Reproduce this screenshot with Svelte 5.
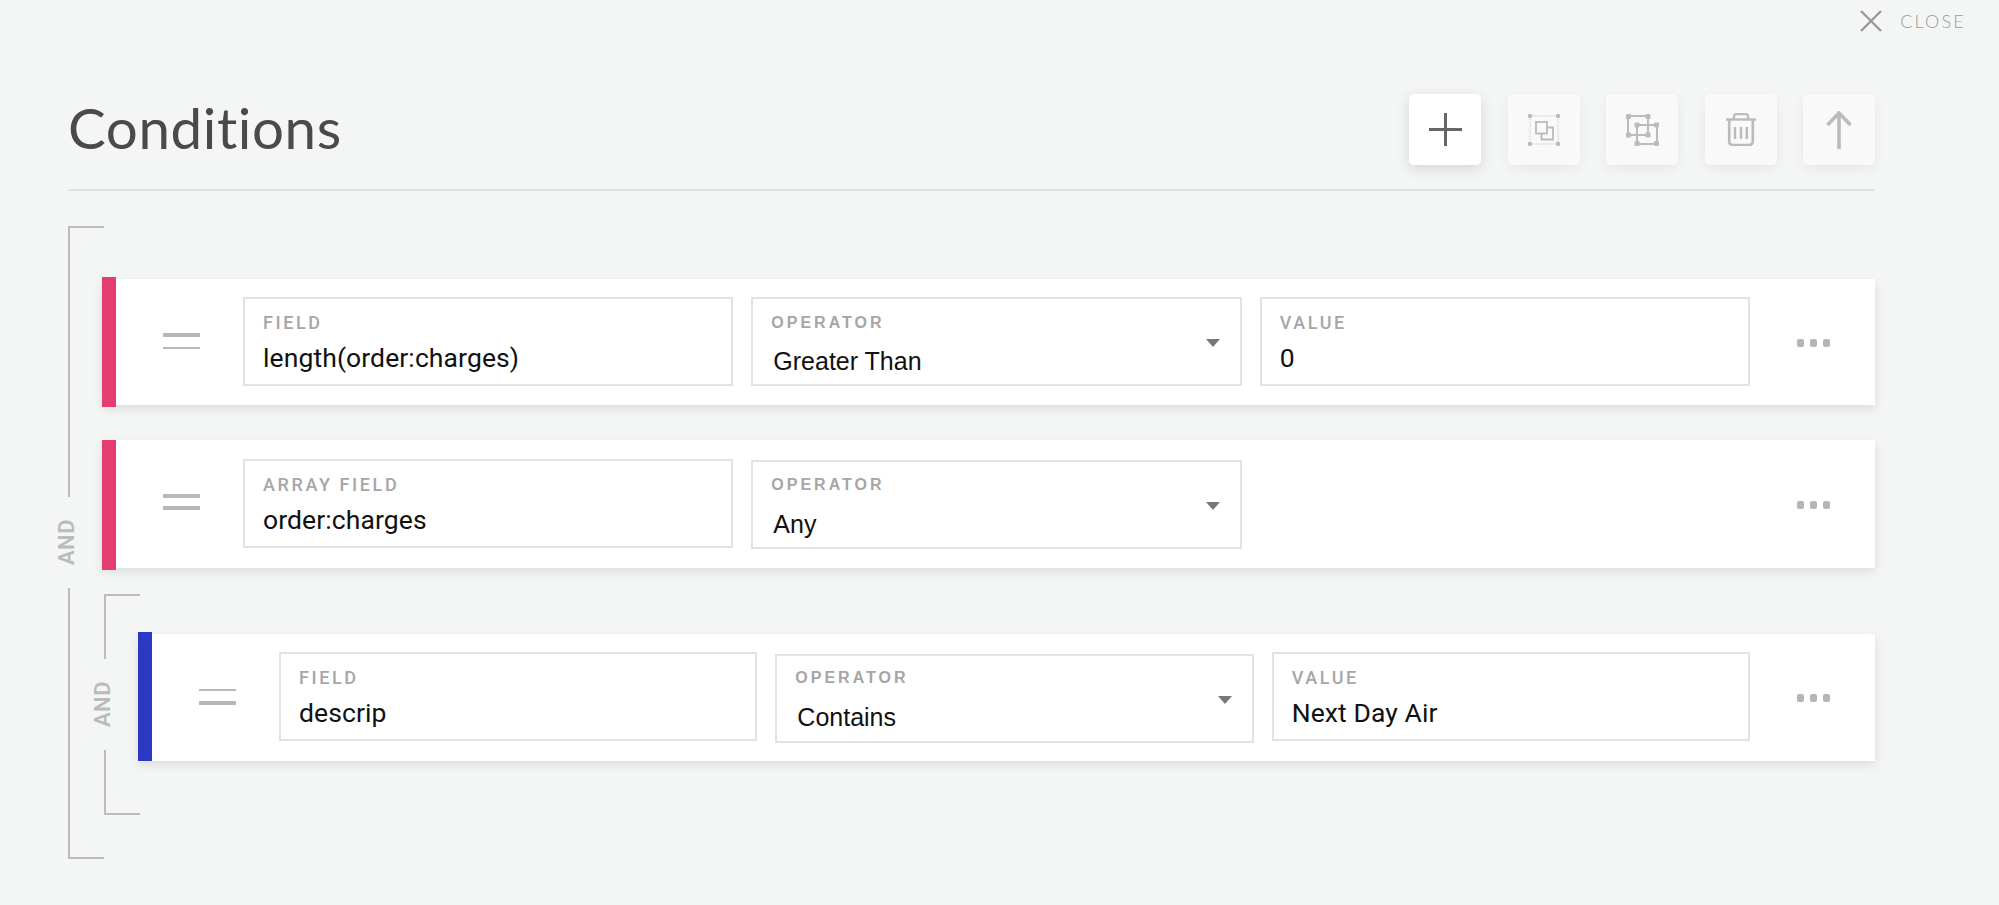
<script>
    // rule rows; the tiny row differences come from the reference's scaling
    const outerRules = [
        {
            cls: "r1 pink",
            handle: ["thick", "thin"],
            cells: [
                { label: "FIELD", value: "length(order:charges)" },
                { label: "OPERATOR", value: "Greater Than", select: true },
                { label: "VALUE", value: "0" },
            ],
        },
        {
            cls: "r2 pink",
            handle: ["thick", "thick"],
            cells: [
                { label: "ARRAY FIELD", value: "order:charges" },
                { label: "OPERATOR", value: "Any", select: true, low: true },
                null,
            ],
        },
    ];

    const innerRule = {
        cls: "r3 blue",
        handle: ["thin", "thick"],
        cells: [
            { label: "FIELD", value: "descrip" },
            { label: "OPERATOR", value: "Contains", select: true, low: true },
            { label: "VALUE", value: "Next Day Air" },
        ],
    };
</script>

{#snippet rule(item)}
    <div class="rule {item.cls}">
        <div class="handle">
            <span class={item.handle[0]}></span>
            <span class={item.handle[1]}></span>
        </div>
        <div class="cells">
            {#each item.cells as cell}
                {#if cell}
                    <div class="cell" class:select={cell.select} class:low={cell.low}>
                        <span class="label">{cell.label}</span>
                        <span class="value">{cell.value}</span>
                        {#if cell.select}
                            <i class="caret"></i>
                        {/if}
                    </div>
                {:else}
                    <div class="cell empty"></div>
                {/if}
            {/each}
        </div>
        <div class="dots">
            <span></span><span></span><span></span>
        </div>
    </div>
{/snippet}

{#snippet rail()}
    <div class="rail">
        <div class="rail-line top"></div>
        <div class="rail-mid"><span>AND</span></div>
        <div class="rail-line bottom"></div>
    </div>
{/snippet}

<div class="page">
    <div class="close">
        <svg viewBox="0 0 22 22" width="22" height="22">
            <path d="M1 1 21 21M21 1 1 21" fill="none" stroke="#999" stroke-width="2.4" />
        </svg>
        <span>CLOSE</span>
    </div>

    <header class="head">
        <h1>Conditions</h1>
        <div class="tools">
            <button class="tool active" aria-label="Add">
                <svg viewBox="0 0 33 33" width="33" height="33">
                    <path d="M16.5 0V33M0 16.5H33" stroke="#666" stroke-width="3" fill="none" />
                </svg>
            </button>
            <button class="tool" aria-label="Copy">
                <svg viewBox="0 0 32 32" width="32" height="32">
                    <rect x="2" y="2" width="28" height="28" fill="none" stroke="#c4c4c4" stroke-width="1" stroke-dasharray="1.2 1.2" />
                    <g fill="#bbb">
                        <rect x="0" y="0" width="4" height="4" rx="1" />
                        <rect x="28" y="0" width="4" height="4" rx="1" />
                        <rect x="0" y="28" width="4" height="4" rx="1" />
                        <rect x="28" y="28" width="4" height="4" rx="1" />
                    </g>
                    <rect x="8" y="8" width="11" height="11.5" fill="none" stroke="#bbb" stroke-width="1.8" />
                    <path d="M19 13.5H25V25.5H13.5V19.5" fill="none" stroke="#bbb" stroke-width="1.8" />
                </svg>
            </button>
            <button class="tool" aria-label="Group">
                <svg viewBox="0 0 33 32" width="33" height="32">
                    <g fill="none" stroke="#bbb" stroke-width="2">
                        <rect x="2" y="2" width="20" height="19" />
                        <rect x="11" y="11" width="20" height="19" />
                    </g>
                    <g fill="#bbb">
                        <rect x="0" y="0" width="5" height="5" rx="1" />
                        <rect x="19.5" y="0" width="5" height="5" rx="1" />
                        <rect x="0" y="18.5" width="5" height="5" rx="1" />
                        <rect x="19.5" y="18.5" width="5" height="5" rx="1" />
                        <rect x="8.5" y="8.5" width="5" height="5" rx="1" />
                        <rect x="28" y="8.5" width="5" height="5" rx="1" />
                        <rect x="8.5" y="27" width="5" height="5" rx="1" />
                        <rect x="28" y="27" width="5" height="5" rx="1" />
                    </g>
                </svg>
            </button>
            <button class="tool" aria-label="Delete">
                <svg viewBox="0 0 30 33" width="30" height="33">
                    <g fill="none" stroke="#bbb">
                        <path d="M0 6.5H30" stroke-width="2.4" />
                        <path d="M8 6V3.5Q8 1.2 10.5 1.2H19.5Q22 1.2 22 3.5V6" stroke-width="2.2" />
                        <path d="M3.2 7V28Q3.2 32 7 32H23Q26.8 32 26.8 28V7" stroke-width="2.6" />
                        <path d="M9 14V26M15 14V26M20.8 14V26" stroke-width="2.4" />
                    </g>
                </svg>
            </button>
            <button class="tool" aria-label="Move up">
                <svg viewBox="0 0 26 38" width="26" height="38">
                    <path d="M13 2V38M1.5 14 13 2 24.5 14" fill="none" stroke="#bbb" stroke-width="3.6" />
                </svg>
            </button>
        </div>
    </header>

    <section class="group outer">
        {@render rail()}
        <div class="body">
            {#each outerRules as item}
                {@render rule(item)}
            {/each}
            <div class="group inner">
                {@render rail()}
                <div class="body">
                    {@render rule(innerRule)}
                </div>
            </div>
        </div>
    </section>
</div>

<style>
    :global(body) {
        margin: 0;
        background: #f4f6f5;
    }

    .page {
        height: 905px;
        overflow: hidden;
        font-family: Roboto, sans-serif;
    }

    .close {
        height: 42px;
        display: flex;
        justify-content: flex-end;
        align-items: center;
        gap: 18px;
        padding-right: 33px;
        color: #9c9c9c;
        font-family: Lato, sans-serif;
        font-weight: 300;
        font-size: 18px;
        letter-spacing: 2.2px;
    }

    .head {
        margin: 0 124px 0 68px;
        padding: 52px 0 24px;
        display: flex;
        justify-content: space-between;
        align-items: center;
        border-bottom: 2px solid #e0e3e3;
    }

    h1 {
        margin: -5px 0 0 0;
        font-family: Lato, sans-serif;
        font-weight: 400;
        font-size: 56.5px;
        line-height: 64px;
        letter-spacing: 0.6px;
        font-variant-ligatures: none;
        color: #4a4a4a;
    }

    .tools {
        display: flex;
        gap: 26.5px;
    }

    .tool {
        width: 72px;
        height: 71px;
        padding: 0;
        border: none;
        border-radius: 5px;
        background: #f9f9f9;
        box-shadow: 0 4px 12px rgba(0, 0, 0, 0.06);
        display: flex;
        align-items: center;
        justify-content: center;
    }

    .tool.active {
        background: #fff;
        box-shadow: 0 4px 14px rgba(0, 0, 0, 0.13);
    }

    .group {
        display: flex;
    }

    .outer {
        margin: 35px 124px 0 68px;
        height: 633px;
    }

    .inner {
        margin: 26px 0 0 2px;
        height: 221px;
    }

    .body {
        flex: 1;
        min-width: 0;
        display: flex;
        flex-direction: column;
    }

    .outer > .body {
        padding-top: 53px;
    }

    .inner > .body {
        padding-top: 40px;
    }

    .rail {
        width: 36px;
        margin-right: -2px;
        flex: none;
        display: flex;
        flex-direction: column;
    }

    .rail-line {
        flex: 1;
        border-left: 2px solid #bcbcbc;
    }

    .rail-line.top {
        border-top: 2px solid #bcbcbc;
    }

    .rail-line.bottom {
        border-bottom: 2px solid #bcbcbc;
    }

    .rail-mid {
        height: 91px;
        display: flex;
        align-items: center;
    }

    .rail-mid span {
        width: 24px;
        margin-left: -13px;
        writing-mode: vertical-rl;
        transform: rotate(180deg);
        text-align: center;
        line-height: 24px;
        font-weight: 600;
        font-size: 22px;
        letter-spacing: 0.5px;
        color: #bbb;
    }

    .rule {
        position: relative;
        display: flex;
        align-items: flex-start;
        padding: 18px 45px 0 61px;
        background: #fff;
        box-shadow: 0 4px 10px rgba(0, 0, 0, 0.1);
    }

    .rule::before {
        content: "";
        position: absolute;
        left: 0;
        width: 14px;
    }

    .pink::before {
        background: #e63d70;
    }

    .blue::before {
        background: #2b38c4;
    }

    .r1 {
        height: 126px;
        box-sizing: border-box;
    }

    .r1::before {
        top: -2px;
        bottom: -2px;
    }

    .r2 {
        height: 128px;
        box-sizing: border-box;
        margin-top: 35px;
    }

    .r2::before {
        top: 0;
        bottom: -2px;
    }

    .r3 {
        height: 127px;
        box-sizing: border-box;
    }

    .r3::before {
        top: -2px;
        bottom: 0;
    }

    .handle {
        width: 37px;
        height: 16px;
        margin: 36px 43px 0 0;
        flex: none;
        display: flex;
        flex-direction: column;
        justify-content: space-between;
    }

    .r3 .handle {
        margin-top: 37px;
    }

    .handle span {
        display: block;
        background: #b8b8b8;
    }

    .thick {
        height: 4px;
    }

    .thin {
        height: 2px;
    }

    .cells {
        flex: 1;
        min-width: 0;
        display: flex;
        gap: 18px;
    }

    .cell {
        flex: 1 1 0;
        min-width: 0;
        position: relative;
        height: 89px;
        box-sizing: border-box;
        border: 2px solid #e2e2e2;
        padding: 14px 18px 0;
    }

    .cell.empty {
        border-color: transparent;
    }

    .r2 .cell {
        margin-top: 1px;
    }

    .cell.low,
    .r2 .cell.low {
        margin-top: 2px;
    }

    .label {
        display: block;
        font-weight: 500;
        font-size: 18px;
        line-height: 20px;
        letter-spacing: 2.6px;
        color: #a6a6a6;
    }

    .value {
        display: block;
        margin-top: 9px;
        font-size: 26.5px;
        line-height: 32px;
        letter-spacing: 0.1px;
        color: #111;
    }

    .select .label {
        font-family: "Liberation Sans", sans-serif;
        font-weight: 700;
        font-size: 16px;
        letter-spacing: 3px;
    }

    .low .label {
        margin-top: -1px;
    }

    .r3 .low .label {
        margin-top: -2px;
    }

    .select .value {
        margin: 12px 0 0 2px;
        font-family: "Liberation Sans", sans-serif;
        font-size: 25px;
        letter-spacing: 0;
    }

    .low .value {
        margin-top: 13px;
    }

    .caret {
        position: absolute;
        right: 20px;
        top: 40px;
        width: 0;
        height: 0;
        border-left: 7px solid transparent;
        border-right: 7px solid transparent;
        border-top: 8px solid #777;
    }

    .dots {
        width: 33px;
        margin: 42px 0 0 47px;
        flex: none;
        display: flex;
        justify-content: space-between;
    }

    .r2 .dots {
        margin-top: 43px;
    }

    .dots span {
        width: 7px;
        height: 8px;
        border-radius: 2px;
        background: #b5b5b5;
    }
</style>
